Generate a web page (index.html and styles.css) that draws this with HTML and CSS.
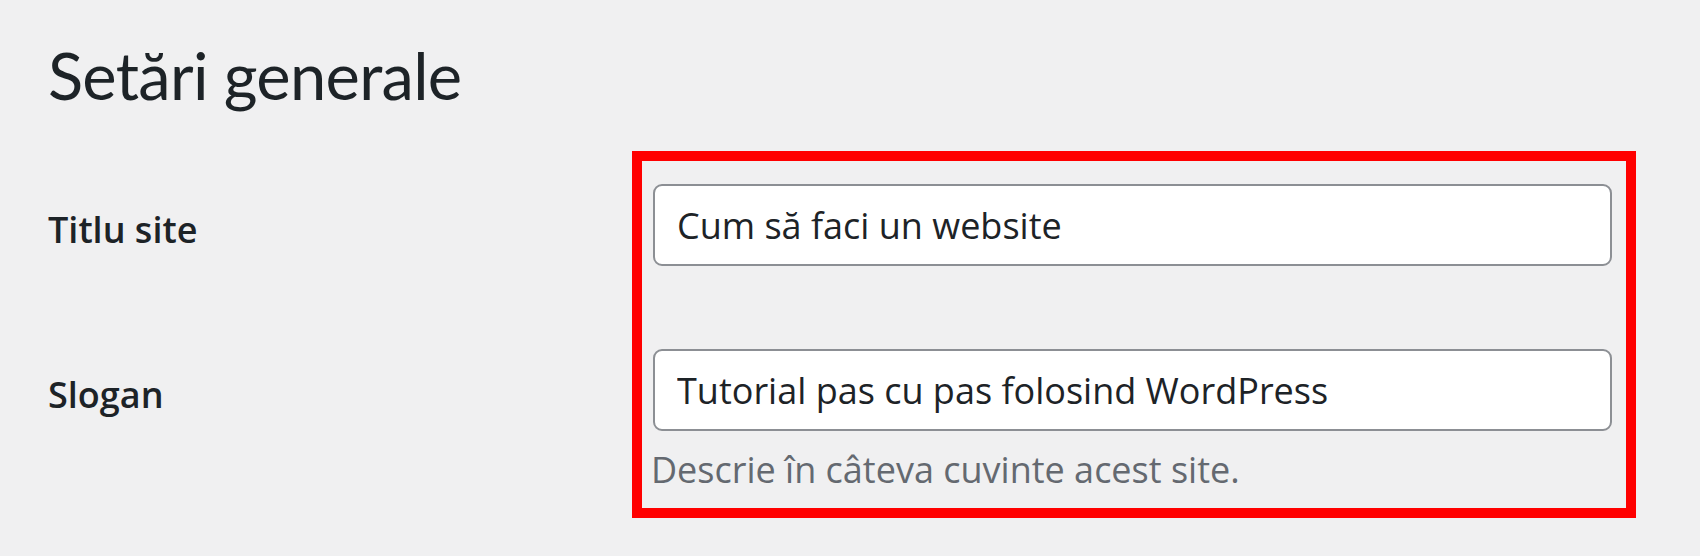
FILE: index.html
```html
<!DOCTYPE html>
<html lang="ro">
<head>
    <meta charset="UTF-8">
    <meta name="viewport" content="width=device-width, initial-scale=1.0">
    <title>Setări generale</title>
    <link rel="stylesheet" href="styles.css">
</head>
<body>
    <div class="wrap">
        <h1>Setări generale</h1>

        <form class="settings-form">
            <div class="labels">
                <div class="label-row"><label for="blogname">Titlu site</label></div>
                <div class="label-row"><label for="blogdescription">Slogan</label></div>
            </div>

            <div class="highlight-box">
                <input type="text" id="blogname" class="regular-text" value="Cum să faci un website">
                <input type="text" id="blogdescription" class="regular-text second" value="Tutorial pas cu pas folosind WordPress">
                <p class="description">Descrie în câteva cuvinte acest site.</p>
            </div>
        </form>
    </div>
</body>
</html>
```

FILE: styles.css
```css
body {
    margin: 0;
    padding: 0;
    background-color: #f0f0f1;
    color: #1d2327;
    font-family: "Open Sans", "Noto Sans", Arial, sans-serif;
}
.wrap {
    padding: 0 0 0 48px;
}
h1 {
    margin: 0;
    padding-top: 30px;
    font-family: Lato, "Open Sans", sans-serif;
    font-size: 65px;
    font-weight: 400;
    letter-spacing: -0.7px;
    line-height: 90px;
}
.settings-form {
    display: flex;
    align-items: flex-start;
    margin-top: 31px;
}
.labels {
    width: 584px;
    padding-top: 33px;
    display: flex;
    flex-direction: column;
    gap: 83px;
}
.label-row {
    height: 82px;
    display: flex;
    align-items: center;
    padding-top: 8px;
    box-sizing: border-box;
}
.label-row label {
    font-size: 36px;
    font-weight: 600;
}
.highlight-box {
    width: 1004px;
    box-sizing: border-box;
    border: 10px solid #ff0000;
    padding: 23px 14px 0 11px;
    height: 367px;
}
.regular-text {
    display: block;
    width: 100%;
    height: 82px;
    box-sizing: border-box;
    margin: 0;
    padding: 0 22px;
    border: 2px solid #8c8f94;
    border-radius: 9px;
    background: #fff;
    color: #1d2327;
    font-family: inherit;
    font-size: 36px;
}
.regular-text.second {
    margin-top: 83px;
}
.description {
    margin: 16px 0 0 -2px;
    color: #646970;
    font-size: 36px;
    line-height: 46px;
}
```
